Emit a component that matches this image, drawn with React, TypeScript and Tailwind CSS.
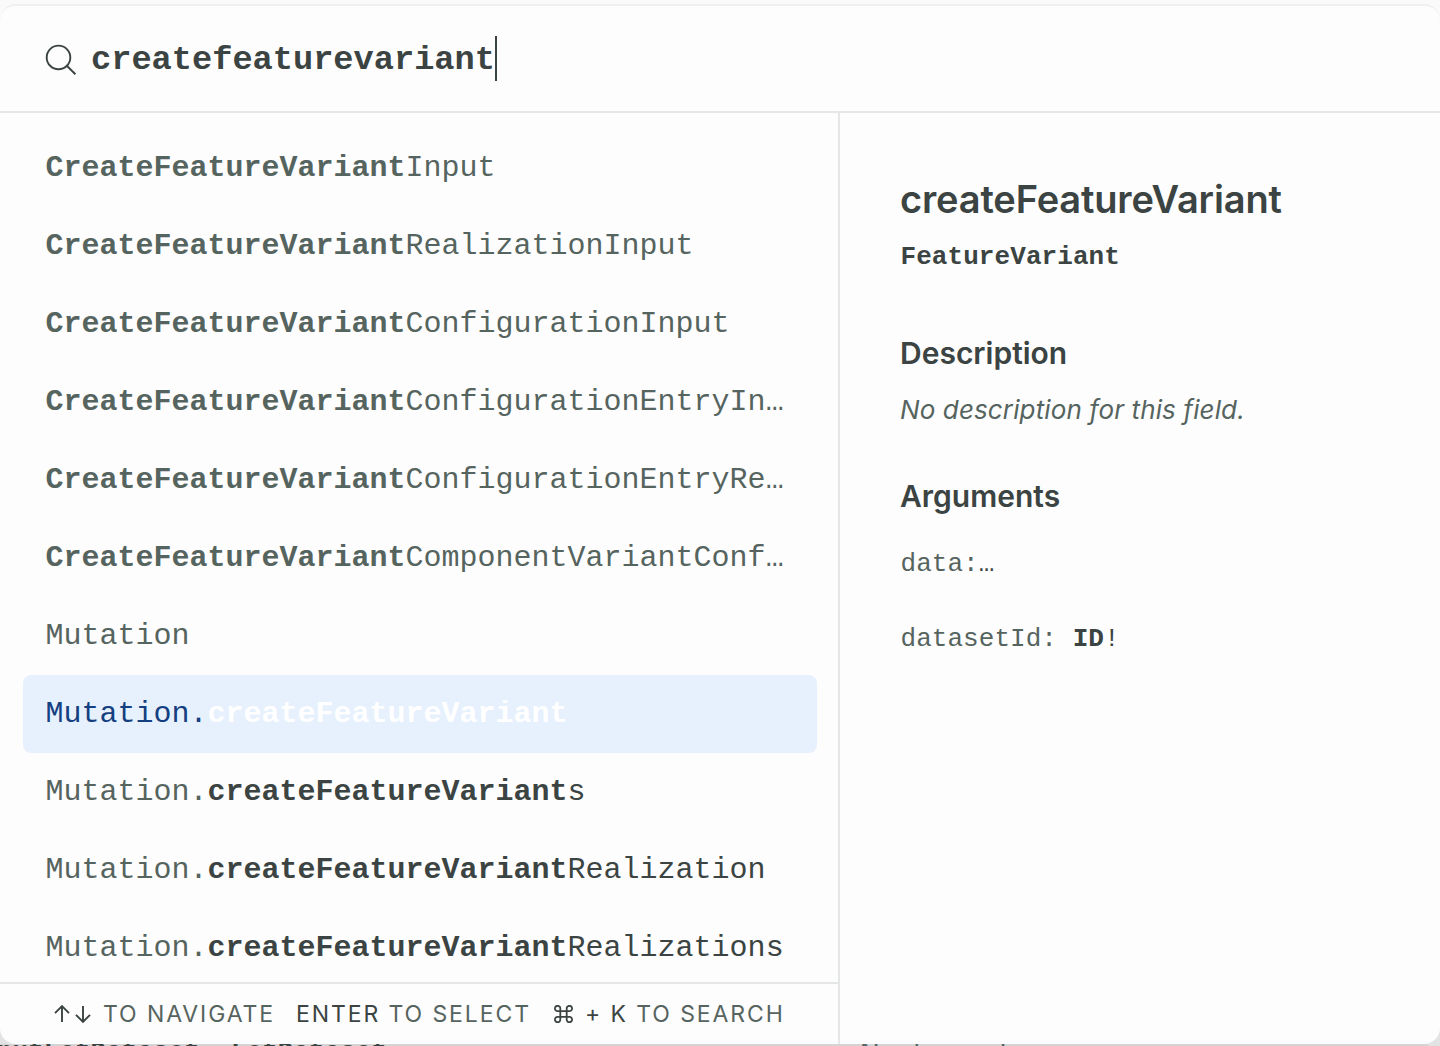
import React from "react";

type Row = { pre?: string; match?: string; post?: string; kind: "type" | "field" | "active" };

const M = "CreateFeatureVariant";
const F = "createFeatureVariant";

const rows: Row[] = [
  { match: M, post: "Input", kind: "type" },
  { match: M, post: "RealizationInput", kind: "type" },
  { match: M, post: "ConfigurationInput", kind: "type" },
  { match: M, post: "ConfigurationEntryInput", kind: "type" },
  { match: M, post: "ConfigurationEntryRealizationInput", kind: "type" },
  { match: M, post: "ComponentVariantConfigurationInput", kind: "type" },
  { pre: "Mutation", kind: "type" },
  { pre: "Mutation.", match: F, kind: "active" },
  { pre: "Mutation.", match: F, post: "s", kind: "field" },
  { pre: "Mutation.", match: F, post: "Realization", kind: "field" },
  { pre: "Mutation.", match: F, post: "Realizations", kind: "field" },
];

const mono = "font-['Liberation_Mono',monospace]";

const rowStyle = {
  type: "text-[#56645f]",
  field: "text-[#56645f]",
  active: "bg-[#e7f1fe] text-[#143f80]",
};
const nameStyle = {
  type: "",
  field: "text-[#3b4442]",
  active: "text-white",
};

function SearchIcon() {
  return (
    <svg className="mt-[2px] h-[32px] w-[32px] shrink-0" viewBox="0 0 32 32" fill="none" stroke="#3b4442" strokeWidth="1.9">
      <circle cx="13.5" cy="13.4" r="11.8" />
      <path d="M21.8 21.8L30.4 30.2" />
    </svg>
  );
}

export default function App() {
  return (
    <div className="relative h-[1046px] w-[1440px] overflow-hidden bg-[linear-gradient(to_bottom,#fafafa,#f0f1f1_50%,#e2e4e4)] pt-1 font-['Inter',sans-serif] text-[#3b4442]">
      <div className="absolute bottom-0 left-0 right-3 h-[2px] overflow-hidden bg-[#d4d4d4]">
        <div className={`${mono} absolute -left-[3px] -top-[5px] whitespace-pre text-[26px] font-bold leading-[26px]`}>
          {"putLetDataset, LetDataset"}
        </div>
        <div className="absolute left-[860px] -top-[5px] whitespace-pre text-[26px] tracking-[0.5px] leading-[26px] text-[#56645f]">No description</div>
      </div>
      <div className="relative flex h-[1040px] flex-col overflow-hidden rounded-[16px] border-t-2 border-[#efefef] bg-[#fdfdfd]">
        <header className="flex h-[107px] shrink-0 items-center border-b-2 border-[#e5e7e7] pl-[45px]">
          <SearchIcon />
          <span className={`${mono} ml-[14px] pt-[2px] text-[33.67px] font-bold leading-[44px]`}>createfeaturevariant</span>
          <span className="h-[45px] w-[2px] bg-[#3b4442]" />
        </header>
        <div className="flex min-h-0 flex-1">
          <section className="flex w-[840px] shrink-0 flex-col border-r-2 border-[#e5e7e7]">
            <ul className={`${mono} min-h-0 flex-1 overflow-hidden pt-4 pl-[23px] pr-[21px] text-[30px]`}>
              {rows.map((r, i) => (
                <li key={i} className={`h-[78px] rounded-lg pl-[22.5px] pr-[30px] leading-[78px] ${rowStyle[r.kind]}`}>
                  <div className="truncate">
                    {r.pre}
                    <span className={nameStyle[r.kind]}>
                      <b>{r.match}</b>
                      {r.post}
                    </span>
                  </div>
                </li>
              ))}
            </ul>
            <footer className="flex h-[62px] shrink-0 items-center border-t-2 border-[#e5e7e7] pl-[52px] text-[23px] tracking-[1.9px] text-[#56645f]">
              <div className="flex w-[244px] items-center">
                <svg className="mr-[12px] h-[20px] w-[39px]" viewBox="0 0 39 20" fill="none" stroke="#3b4442" strokeWidth="1.9">
                  <path d="M10 18V2M3 9.2L10 2L17 9.2M31 2V18M24 10.8L31 18L38 10.8" />
                </svg>
                TO NAVIGATE
              </div>
              <div className="w-[258px] whitespace-pre">
                <span className="text-[#3b4442]">ENTER</span> TO SELECT
              </div>
              <div className="flex items-center whitespace-pre">
                <svg className="mr-[12px] h-[18px] w-[19px]" viewBox="0 0 19 18" fill="none" stroke="#3b4442" strokeWidth="1.8">
                  <path d="M6.3 6.2H12.7V11.8H6.3ZM6.3 6.2V3.7A2.7 2.7 0 1 0 3.6 6.2ZM12.7 6.2V3.7A2.7 2.7 0 1 1 15.4 6.2ZM6.3 11.8V14.3A2.7 2.7 0 1 1 3.6 11.8ZM12.7 11.8V14.3A2.7 2.7 0 1 0 15.4 11.8Z" />
                </svg>
                <span className="text-[#3b4442]">+ K</span> TO SEARCH
              </div>
            </footer>
          </section>
          <section className="flex-1 pl-[60px] pt-[62px]">
            <h1 className="text-[38px] font-semibold leading-[48px] tracking-[-0.15px]">createFeatureVariant</h1>
            <p className={`${mono} mt-[16px] pl-[0.5px] text-[26px] font-bold leading-[36px] tracking-[0.07px]`}>FeatureVariant</p>
            <h2 className="mt-[59px] text-[30px] font-semibold leading-[38px]">Description</h2>
            <p className="mt-[20px] text-[26px] italic leading-[36px] tracking-[0.12px] text-[#56645f]">No description for this field.</p>
            <h2 className="mt-[49px] text-[30px] font-semibold leading-[38px]">Arguments</h2>
            <p className={`${mono} mt-[31px] pl-[0.5px] text-[26px] leading-[36px] tracking-[0.05px] text-[#56645f]`}>
              data:<span className="text-[#3b4442]">…</span>
            </p>
            <p className={`${mono} mt-[39px] pl-[0.5px] text-[26px] leading-[36px] tracking-[0.05px] text-[#56645f]`}>
              datasetId: <span className="text-[#3b4442]"><b>ID</b>!</span>
            </p>
          </section>
        </div>
      </div>
    </div>
  );
}
